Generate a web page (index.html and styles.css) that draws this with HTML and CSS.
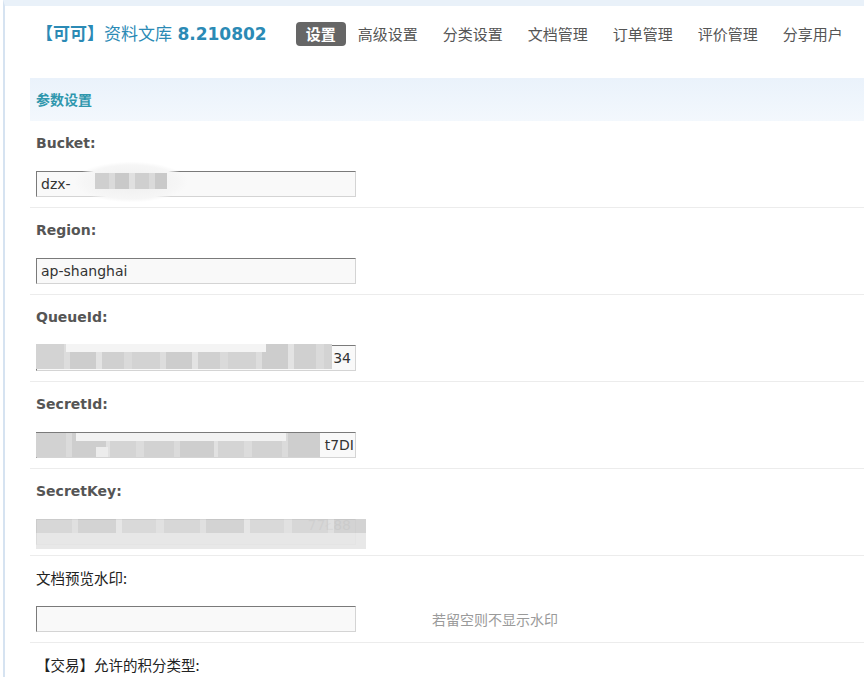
FILE: index.html
```html
<!DOCTYPE html>
<html lang="zh-CN">
<head>
<meta charset="utf-8">
<title>资料文库 设置</title>
<link rel="stylesheet" href="styles.css">
</head>
<body>
<div class="frame">
  <div class="header">
    <h1 class="title"><b>【可可】</b>资料文库 <b class="ver">8.210802</b></h1>
    <ul class="nav">
      <li class="active">设置</li>
      <li>高级设置</li>
      <li>分类设置</li>
      <li>文档管理</li>
      <li>订单管理</li>
      <li>评价管理</li>
      <li>分享用户</li>
    </ul>
  </div>
  <div class="main">
    <div class="section">参数设置</div>

    <div class="row">
      <div class="label">Bucket:</div>
      <div class="field">
        <div class="input"><span class="val">dzx-</span><span class="mask mask-bucket"></span></div>
      </div>
    </div>

    <div class="row">
      <div class="label">Region:</div>
      <div class="field">
        <div class="input"><span class="val">ap-shanghai</span></div>
      </div>
    </div>

    <div class="row">
      <div class="label">QueueId:</div>
      <div class="field">
        <div class="input end"><span class="val">34</span><span class="mask mask-queue"></span></div>
      </div>
    </div>

    <div class="row">
      <div class="label">SecretId:</div>
      <div class="field">
        <div class="input end tight"><span class="val">t7DI</span><span class="mask mask-sid"></span></div>
      </div>
    </div>

    <div class="row">
      <div class="label">SecretKey:</div>
      <div class="field">
        <div class="input end"><span class="val faint">77Ł88</span><span class="mask mask-skey"></span></div>
      </div>
    </div>

    <div class="row">
      <div class="label cjk">文档预览水印:</div>
      <div class="field">
        <div class="input"></div>
        <span class="hint">若留空则不显示水印</span>
      </div>
    </div>

    <div class="row last">
      <div class="label cjk">【交易】允许的积分类型:</div>
    </div>
  </div>
</div>
</body>
</html>
```

FILE: styles.css
```css
html, body {
  margin: 0;
  padding: 0;
  background: #ffffff;
}
body {
  font-family: "DejaVu Sans", "Noto Sans CJK SC", sans-serif;
  color: #444;
  padding-left: 3px;
  height: 677px;
  overflow: hidden;
}
.frame {
  border-left: 2px solid #d6e3f1;
  border-top: 6px solid #e9f1f9;
  height: 671px;
  overflow: hidden;
}
.header {
  display: flex;
  align-items: flex-start;
  height: 72px;
  padding-left: 31px;
  padding-top: 16px;
  box-sizing: border-box;
}
.title {
  margin: 0;
  font-size: 17px;
  font-weight: normal;
  line-height: 24px;
  color: #2b8ab5;
  font-family: "DejaVu Sans", "Noto Sans CJK SC", sans-serif;
  white-space: nowrap;
}
.title b {
  font-weight: bold;
}
.nav {
  list-style: none;
  margin: 0 0 0 29px;
  padding: 0;
  display: flex;
  gap: 25px;
  white-space: nowrap;
}
.nav li {
  font-family: "Noto Sans CJK SC", sans-serif;
  font-size: 15px;
  line-height: 24px;
  color: #555;
}
.nav li.active {
  background: #666666;
  color: #fff;
  font-weight: bold;
  padding: 0 10px;
  border-radius: 4px;
  margin-right: -13px;
}
.main {
  margin-left: 25px;
}
.section {
  height: 43px;
  line-height: 42px;
  padding-left: 6px;
  background: linear-gradient(#eaf2fb, #f3f8fd);
  color: #2f97ad;
  font-family: "Noto Sans CJK SC", sans-serif;
  font-weight: bold;
  font-size: 14px;
}
.row {
  border-bottom: 1px solid #ececec;
  padding: 13px 0 11px 6px;
  height: 62px;
}
.row.last {
  border-bottom: none;
}
.label {
  font-size: 14px;
  line-height: 18px;
  font-weight: bold;
  color: #555;
}
.label.cjk {
  font-family: "Noto Sans CJK SC", sans-serif;
  font-weight: normal;
  color: #222;
  font-size: 14.5px;
}
.field {
  margin-top: 19px;
  display: flex;
  align-items: center;
}
.input {
  position: relative;
  box-sizing: border-box;
  width: 320px;
  height: 26px;
  border: 1px solid;
  border-color: #7a7a7a #d4d4d4 #d4d4d4 #7a7a7a;
  background: #f9f9f9;
  display: flex;
  align-items: center;
  padding: 0 4px;
  overflow: visible;
}
.input.end {
  justify-content: flex-end;
}
.input.tight {
  padding-right: 1px;
}
.val {
  font-size: 14px;
  color: #333;
  white-space: nowrap;
  font-family: "DejaVu Sans", sans-serif;
}
.val.faint {
  color: #aaa;
  margin-top: -14px;
}
.hint {
  margin-left: 76px;
  font-family: "Noto Sans CJK SC", sans-serif;
  font-size: 14px;
  color: #9a9a9a;
}
.mask {
  position: absolute;
  display: block;
}
.mask-bucket {
  left: 38px;
  top: -10px;
  width: 112px;
  height: 40px;
  border-radius: 14px;
  background: radial-gradient(ellipse at 50% 50%, #eeeeee 0%, #f6f6f6 60%, rgba(255,255,255,0) 72%);
}
.mask-bucket::after {
  content: "";
  position: absolute;
  left: 20px;
  top: 11px;
  width: 72px;
  height: 16px;
  background: repeating-linear-gradient(90deg, #cfcfcf 0 14px, #dadada 14px 20px, #c9c9c9 20px 34px, #e0e0e0 34px 40px);
}
.mask-queue {
  left: -1px;
  top: -2px;
  width: 296px;
  height: 25px;
  background:
    linear-gradient(#f4f4f4, #f4f4f4) 30px 0 / 200px 8px no-repeat,
    repeating-linear-gradient(90deg, #d3d3d3 0 28px, #dddddd 28px 34px, #cdcdcd 34px 60px, #e3e3e3 60px 66px, #d0d0d0 66px 88px, #dadada 88px 96px);
}
.mask-sid {
  left: -1px;
  top: 0;
  width: 284px;
  height: 24px;
  background:
    linear-gradient(#f2f2f2, #f2f2f2) 40px 0 / 210px 8px no-repeat,
    linear-gradient(#ececec, #ececec) 60px 14px / 12px 10px no-repeat,
    repeating-linear-gradient(90deg, #d2d2d2 0 30px, #dbdbdb 30px 36px, #cecece 36px 70px, #e1e1e1 70px 74px, #d4d4d4 74px 100px, #dcdcdc 100px 108px);
}
.mask-skey {
  left: -1px;
  top: -1px;
  width: 330px;
  height: 30px;
  background:
    linear-gradient(#e6e6e6, #e6e6e6) 0 14px / 330px 16px no-repeat,
    repeating-linear-gradient(90deg, #d4d4d4 0 36px, #dedede 36px 42px, #cfcfcf 42px 80px, #e4e4e4 80px 86px, #d6d6d6 86px 120px, #dfdfdf 120px 128px);
  opacity: 0.9;
}
```
